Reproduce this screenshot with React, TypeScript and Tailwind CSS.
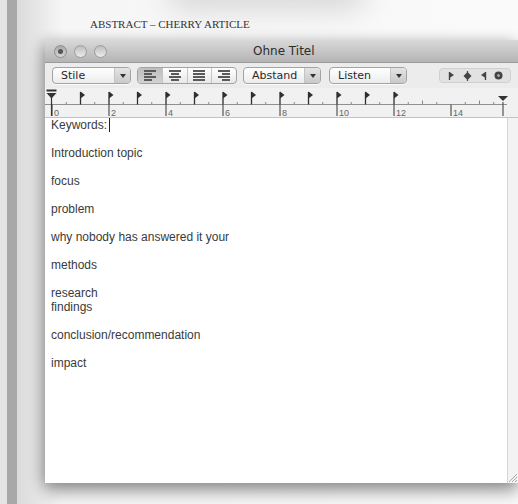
import React from 'react';

const lines: string[] = [
  'Introduction topic',
  '',
  'focus',
  '',
  'problem',
  '',
  'why nobody has answered it your',
  '',
  'methods',
  '',
  'research',
  'findings',
  '',
  'conclusion/recommendation',
  '',
  'impact',
];

const UNIT = 28.5;
const ORIGIN = 7;
const BASE = 16.5;

function Popup({ label, className }: { label: string; className: string }) {
  return (
    <div
      className={`flex h-[17px] items-stretch overflow-hidden rounded-[4px] border border-[#a3a3a3] bg-gradient-to-b from-white to-[#ececec] shadow-[0_1px_0_rgba(255,255,255,0.8)] ${className}`}
    >
      <span className="flex-1 pl-[8px] text-[11px] leading-[15px] text-[#2a2a2a]">{label}</span>
      <span className="flex w-[16px] items-center justify-center border-l border-[#c4c4c4] bg-gradient-to-b from-[#e4e4e4] to-[#c9c9c9]">
        <span className="h-0 w-0 border-x-[3px] border-t-[4px] border-x-transparent border-t-[#333]" />
      </span>
    </div>
  );
}

function AlignIcon({ kind }: { kind: 'left' | 'center' | 'justify' | 'right' }) {
  const rows = [0, 3, 6, 9];
  const spans: Record<string, [number, number][]> = {
    left: [[0, 12], [0, 8], [0, 12], [0, 8]],
    center: [[0, 12], [2, 10], [0, 12], [2, 10]],
    justify: [[0, 12], [0, 12], [0, 12], [0, 12]],
    right: [[0, 12], [4, 12], [0, 12], [4, 12]],
  };
  return (
    <svg width="12" height="11" viewBox="0 0 12 11">
      {rows.map((y, i) => (
        <rect key={i} x={spans[kind][i][0]} y={y} width={spans[kind][i][1] - spans[kind][i][0]} height="2" fill="#5a5a5a" />
      ))}
    </svg>
  );
}

function Ruler() {
  const flags = Array.from({ length: 12 }, (_, i) => ORIGIN + UNIT * (i + 1));
  const majors = Array.from({ length: 8 }, (_, i) => ORIGIN + UNIT * 2 * i);
  const units = Array.from({ length: 16 }, (_, i) => ORIGIN + UNIT * i).filter((_, i) => i % 2 === 1);
  const halves = Array.from({ length: 16 }, (_, i) => ORIGIN + UNIT * (i + 0.5));
  return (
    <svg width="473" height="30" viewBox="0 0 473 30" className="block">
      <line x1="0" y1={BASE} x2="462" y2={BASE} stroke="#8f8f8f" strokeWidth="1" />
      {halves.map((x) => (
        <rect key={`h${x}`} x={x - 0.5} y={BASE - 2.5} width="1" height="2" fill="#888" />
      ))}
      {units.map((x) => (
        <line key={`u${x}`} x1={x} y1={BASE - 4} x2={x} y2={BASE} stroke="#888" strokeWidth="1" />
      ))}
      {majors.map((x, i) => (
        <g key={`M${x}`}>
          <line x1={x} y1={BASE} x2={x} y2="28" stroke="#555" strokeWidth="1.2" />
          <text x={x + 2} y="28" fontSize="9" fill="#666" fontFamily="Liberation Sans, sans-serif">
            {i * 2}
          </text>
        </g>
      ))}
      {flags.map((x) => (
        <g key={`f${x}`}>
          <line x1={x} y1="4" x2={x} y2={BASE} stroke="#2f2f2f" strokeWidth="1.3" />
          <polygon points={`${x},3.5 ${x + 4.5},7 ${x},10.5`} fill="#2f2f2f" />
        </g>
      ))}
      {/* left indent marker */}
      <rect x="1.5" y="1.5" width="10" height="2" fill="#333" />
      <polygon points="1.5,5 11.5,5 6.5,10.5" fill="#333" />
      <line x1="6.5" y1="9" x2="6.5" y2="28" stroke="#333" strokeWidth="1.2" />
      {/* right indent marker */}
      <polygon points="453,8 463,8 458,13" fill="#333" />
      <line x1="458" y1="14" x2="458" y2="28" stroke="#555" strokeWidth="1.2" />
    </svg>
  );
}

function TabWell() {
  return (
    <div className="flex h-[15px] w-[72px] items-center justify-around rounded-[4px] border border-[#d0d0d0] bg-[#e2e2e2] px-[4px]">
      <svg width="8" height="10" viewBox="0 0 8 10">
        <line x1="1.5" y1="1" x2="1.5" y2="9" stroke="#444" strokeWidth="1.4" />
        <polygon points="1.5,1 6,4 1.5,7" fill="#444" />
      </svg>
      <svg width="9" height="10" viewBox="0 0 9 10">
        <line x1="4.5" y1="0" x2="4.5" y2="10" stroke="#444" strokeWidth="1.2" />
        <polygon points="4.5,1 8.5,5 4.5,9 0.5,5" fill="#444" />
      </svg>
      <svg width="8" height="10" viewBox="0 0 8 10">
        <line x1="6.5" y1="1" x2="6.5" y2="9" stroke="#444" strokeWidth="1.4" />
        <polygon points="6.5,1 2,4 6.5,7" fill="#444" />
      </svg>
      <svg width="9" height="9" viewBox="0 0 9 9">
        <circle cx="4.5" cy="4.5" r="4" fill="#444" />
        <circle cx="4.5" cy="4.5" r="1.3" fill="#bbb" />
      </svg>
    </div>
  );
}

export default function App() {
  return (
    <div className="relative flex h-[504px] w-[518px] overflow-hidden bg-[#f8f8f8] font-[family-name:'DejaVu_Sans',sans-serif]">
      {/* page margin strip */}
      <div className="w-[7px] bg-[#e4e4e4]" />
      <div className="w-[10px] bg-[#a8a8a8]" />

      {/* document page */}
      <div className="relative flex flex-1 flex-col bg-gradient-to-r from-[#dadada] via-[#f6f6f6] via-[9%] to-[#fafafa]">
        <div className="pointer-events-none absolute left-[150px] top-[-30px] h-[40px] w-[200px] rounded-full bg-[#d8d8d8] blur-[14px]" />
        <div className="relative h-[40px] pl-[73px] pt-[17px]">
          <p className="font-[family-name:'Liberation_Serif',serif] text-[11px] leading-[14px] text-[#333]">
            ABSTRACT – CHERRY ARTICLE
          </p>
        </div>

        {/* TextEdit window */}
        <div className="relative ml-[28px] flex h-[443px] w-[473px] flex-col shadow-[0_8px_16px_rgba(0,0,0,0.4),-4px_0_12px_rgba(0,0,0,0.12)]">
          {/* title bar */}
          <div className="relative flex h-[22px] items-center bg-gradient-to-b from-[#d9d9d9] to-[#b4b4b4] px-[9px]">
            <div className="flex gap-[7px]">
              <span className="flex h-[13px] w-[13px] items-center justify-center rounded-full border border-[#8d8d8d] bg-gradient-to-b from-[#a8a8a8] to-[#d8d8d8]">
                <span className="h-[5px] w-[5px] rounded-full bg-[#555]" />
              </span>
              <span className="h-[13px] w-[13px] rounded-full border border-[#9c9c9c] bg-gradient-to-b from-[#bdbdbd] to-[#ececec]" />
              <span className="h-[13px] w-[13px] rounded-full border border-[#9c9c9c] bg-gradient-to-b from-[#bdbdbd] to-[#ececec]" />
            </div>
            <span className="absolute left-[208px] top-[3px] text-[12px] leading-[16px] text-[#2c2c2c]">Ohne Titel</span>
          </div>

          {/* toolbar */}
          <div className="flex h-[26px] items-center border-t border-[#9a9a9a] bg-[#ececec] pl-[7px]">
            <Popup label="Stile" className="w-[79px]" />
            <div className="ml-[6px] flex h-[17px] w-[100px] overflow-hidden rounded-[4px] border border-[#a3a3a3] bg-gradient-to-b from-white to-[#e8e8e8]">
              <span className="flex flex-1 items-center justify-center border-r border-[#c4c4c4] bg-gradient-to-b from-[#bdbdbd] to-[#d2d2d2]">
                <AlignIcon kind="left" />
              </span>
              <span className="flex flex-1 items-center justify-center border-r border-[#c4c4c4]">
                <AlignIcon kind="center" />
              </span>
              <span className="flex flex-1 items-center justify-center border-r border-[#c4c4c4]">
                <AlignIcon kind="justify" />
              </span>
              <span className="flex flex-1 items-center justify-center">
                <AlignIcon kind="right" />
              </span>
            </div>
            <Popup label="Abstand" className="ml-[6px] w-[78px]" />
            <Popup label="Listen" className="ml-[8px] w-[78px]" />
            <div className="ml-[32px]">
              <TabWell />
            </div>
          </div>

          {/* ruler */}
          <div className="h-[30px] border-b border-[#c2c2c2] bg-[#f1f1f1]">
            <Ruler />
          </div>

          {/* text area + scroller */}
          <div className="flex flex-1">
            <div className="flex-1 bg-white pl-[6px] font-[family-name:'Liberation_Sans',sans-serif] text-[12px] leading-[14px] text-[#3a3a3a]">
              <p className="flex items-center">
                Keywords:
                <span className="ml-[2px] inline-block h-[14px] w-px bg-[#222]" />
              </p>
              <p>&nbsp;</p>
              {lines.map((t, i) => (
                <p key={i}>{t || '\u00a0'}</p>
              ))}
            </div>
            <div className="relative w-[11px] border-l border-[#d6d6d6] bg-[#f3f3f3]">
              <svg width="10" height="10" viewBox="0 0 10 10" className="absolute bottom-[1px] right-[1px]">
                <line x1="2" y1="10" x2="10" y2="2" stroke="#aaa" />
                <line x1="5" y1="10" x2="10" y2="5" stroke="#aaa" />
                <line x1="8" y1="10" x2="10" y2="8" stroke="#aaa" />
              </svg>
            </div>
          </div>
        </div>
      </div>
    </div>
  );
}
